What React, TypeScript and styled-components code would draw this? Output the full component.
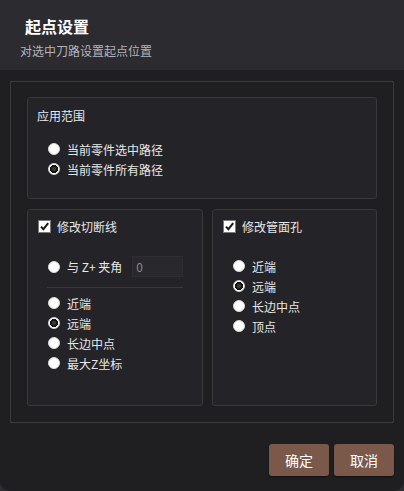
import React from 'react';
import styled, {createGlobalStyle} from 'styled-components';

const GlobalStyle = createGlobalStyle`
  html, body {
    margin: 0;
    padding: 0;
    background: #2e2d32;
  }
  body {
    font-family: "Noto Sans CJK SC", "Noto Sans", sans-serif;
    color: #e6e6e6;
  }
`;

interface RadioProps {
    label: string;
    checked?: boolean;
}

const Radio: React.FC<RadioProps> = ({label, checked}) => (
    <RadioRow>
        <RadioDot $checked={!!checked} />
        <span>{label}</span>
    </RadioRow>
);

const CheckMark = () => (
    <CheckBox>
        <svg width="11" height="11" viewBox="0 0 11 11">
            <path d="M2 5.6 L4.4 8.2 L9.2 2.2" fill="none" stroke="#1a1a1a" strokeWidth="2" />
        </svg>
    </CheckBox>
);

const App: React.FC = () => {
    return (
        <>
            <GlobalStyle />
            <Dialog>
                <Header>
                    <Title>起点设置</Title>
                    <Subtitle>对选中刀路设置起点位置</Subtitle>
                </Header>
                <Body>
                    <Frame>
                        <ScopeGroup>
                            <GroupTitle>应用范围</GroupTitle>
                            <RadioList>
                                <Radio label="当前零件选中路径" />
                                <Radio label="当前零件所有路径" checked />
                            </RadioList>
                        </ScopeGroup>
                        <Columns>
                            <Group>
                                <CheckRow>
                                    <CheckMark />
                                    <span>修改切断线</span>
                                </CheckRow>
                                <SubSection>
                                    <AngleRow>
                                        <Radio label="与 Z+ 夹角" />
                                        <AngleInput type="text" defaultValue="0" readOnly />
                                    </AngleRow>
                                    <Divider />
                                    <Radio label="近端" />
                                    <Radio label="远端" checked />
                                    <Radio label="长边中点" />
                                    <Radio label="最大Z坐标" />
                                </SubSection>
                            </Group>
                            <Group>
                                <CheckRow>
                                    <CheckMark />
                                    <span>修改管面孔</span>
                                </CheckRow>
                                <HoleList>
                                    <Radio label="近端" />
                                    <Radio label="远端" checked />
                                    <Radio label="长边中点" />
                                    <Radio label="顶点" />
                                </HoleList>
                            </Group>
                        </Columns>
                    </Frame>
                </Body>
                <Footer>
                    <ActionButton type="button">确定</ActionButton>
                    <ActionButton type="button">取消</ActionButton>
                </Footer>
            </Dialog>
        </>
    );
};

export default App;

const Dialog = styled.div`
  width: 404px;
  height: 491px;
  background: #1f1e21;
  border-radius: 0 0 10px 10px;
  display: flex;
  flex-direction: column;
  overflow: hidden;
`;

const Header = styled.div`
  height: 70px;
  box-sizing: border-box;
  padding: 15px 20px 0 20px;
  background: #2c2b30;
  display: flex;
  flex-direction: column;
`;

const Title = styled.div`
  font-size: 16px;
  line-height: 22px;
  font-weight: 700;
  color: #ffffff;
  margin-left: 5px;
`;

const Subtitle = styled.div`
  font-size: 12px;
  line-height: 17px;
  color: #b4b4b8;
  margin-top: 5px;
`;

const Body = styled.div`
  padding: 11px 10px 0 10px;
`;

const Frame = styled.div`
  border: 1px solid #3a393e;
  padding: 15px 16px 16px 16px;
  display: flex;
  flex-direction: column;
  gap: 10px;
`;

const Group = styled.div`
  background: #242328;
  border: 1px solid #38373c;
  border-radius: 3px;
  padding: 7px 10px 0 10px;
  box-sizing: border-box;
  height: 197px;
`;

const ScopeGroup = styled(Group)`
  height: 102px;
  padding-top: 9px;
  padding-left: 9px;
`;

const Columns = styled.div`
  display: grid;
  grid-template-columns: 176px 1fr;
  gap: 9px;
`;

const GroupTitle = styled.div`
  font-size: 12px;
  line-height: 18px;
  color: #e8e8e8;
`;

const RadioList = styled.div`
  margin-top: 14px;
  padding-left: 11px;
  display: flex;
  flex-direction: column;
`;

const HoleList = styled.div`
  margin-top: 21px;
  padding-left: 10px;
  display: flex;
  flex-direction: column;
`;

const RadioRow = styled.label`
  display: flex;
  align-items: center;
  height: 20px;
  font-size: 12px;
  color: #e8e8e8;
  gap: 7px;
  white-space: nowrap;
`;

const RadioDot = styled.span<{ $checked: boolean }>`
  width: 12px;
  height: 12px;
  border-radius: 50%;
  box-sizing: border-box;
  flex-shrink: 0;
  background: ${p => p.$checked
    ? 'radial-gradient(circle, #3a3a3a 0 2px, #151515 2.2px 4px, #ffffff 4.3px)'
    : '#ffffff'};
  border: 1px solid #d8d8d8;
`;

const CheckRow = styled.label`
  display: flex;
  align-items: center;
  height: 18px;
  gap: 6px;
  font-size: 12px;
  color: #e8e8e8;
`;

const CheckBox = styled.span`
  width: 13px;
  height: 13px;
  box-sizing: border-box;
  background: #ffffff;
  border: 1px solid #7a7a7a;
  display: flex;
  align-items: center;
  justify-content: center;
`;

const SubSection = styled.div`
  margin: 21px 9px 0 9px;
  display: flex;
  flex-direction: column;
  padding-left: 1px;
`;

const AngleRow = styled.div`
  display: flex;
  align-items: center;
  height: 21px;
  gap: 10px;
`;

const AngleInput = styled.input`
  flex: 1;
  min-width: 0;
  height: 21px;
  box-sizing: border-box;
  background: #29282d;
  border: 1px solid #2f2e33;
  color: #8c8c8c;
  font-family: "Noto Sans CJK SC", "Noto Sans", sans-serif;
  font-size: 12px;
  padding: 0 3px;
  outline: none;
`;

const Divider = styled.div`
  height: 1px;
  background: #3a393e;
  margin: 10px 0 5px -1px;
`;

const Footer = styled.div`
  display: flex;
  justify-content: flex-end;
  gap: 5px;
  padding: 21px 10px 0 0;
`;

const ActionButton = styled.button`
  width: 60px;
  height: 32px;
  background: #7a594b;
  border: none;
  border-radius: 3px;
  color: #ffffff;
  font-family: "Noto Sans CJK SC", "Noto Sans", sans-serif;
  font-size: 14px;
  box-shadow: 0 1px 2px rgba(0, 0, 0, 0.5);
  cursor: pointer;
`;
